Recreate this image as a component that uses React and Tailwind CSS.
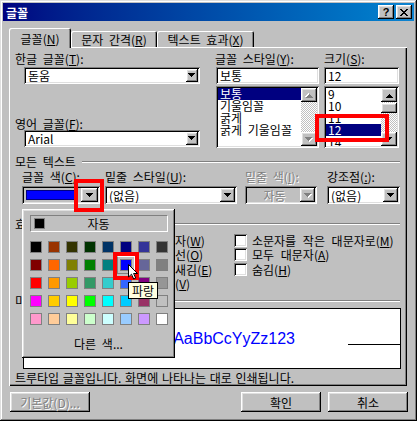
import React from "react";

const font = "font-['Noto_Sans_CJK_KR',sans-serif]";
const raised =
  "shadow-[inset_-1px_-1px_#000,inset_1px_1px_#fff,inset_-2px_-2px_#808080,inset_2px_2px_#dfdfdf]";
const sunken =
  "shadow-[inset_1px_1px_#808080,inset_-1px_-1px_#fff,inset_2px_2px_#000,inset_-2px_-2px_#dfdfdf]";
const etched = "text-[#808080] [text-shadow:1px_1px_0_#fff]";
const checker =
  "bg-[repeating-conic-gradient(#c0c0c0_0_25%,#ffffff_0_50%)] bg-[length:2px_2px]";

const swatches = [
  "bg-[#000000]", "bg-[#993300]", "bg-[#333300]", "bg-[#003300]", "bg-[#003366]", "bg-[#000080]", "bg-[#333399]", "bg-[#333333]",
  "bg-[#800000]", "bg-[#ff6600]", "bg-[#808000]", "bg-[#008000]", "bg-[#008080]", "bg-[#0000ff]", "bg-[#666699]", "bg-[#808080]",
  "bg-[#ff0000]", "bg-[#ff9900]", "bg-[#99cc00]", "bg-[#339966]", "bg-[#33cccc]", "bg-[#3366ff]", "bg-[#800080]", "bg-[#969696]",
  "bg-[#ff00ff]", "bg-[#ffcc00]", "bg-[#ffff00]", "bg-[#00ff00]", "bg-[#00ffff]", "bg-[#00ccff]", "bg-[#993366]", "bg-[#c0c0c0]",
  "bg-[#ff99cc]", "bg-[#ffcc99]", "bg-[#ffff99]", "bg-[#ccffcc]", "bg-[#ccffff]", "bg-[#99ccff]", "bg-[#cc99ff]", "bg-[#ffffff]",
];

function Arrow({ up, gray }) {
  const d = "M0 0h7v1h-1v1h-1v1h-1v1h-1v-1h-1v-1h-1v-1h-1z";
  return (
    <svg width="8" height="5" viewBox="0 0 8 5" shapeRendering="crispEdges" className={up ? "rotate-180" : ""}>
      {gray && <path d={d} fill="#fff" transform="translate(1 1)" />}
      <path d={d} fill={gray ? "#808080" : "#000"} />
    </svg>
  );
}

function DropBtn({ w, gray }) {
  return (
    <div className={`${w} h-full shrink-0 bg-[#c0c0c0] ${raised} flex items-center justify-center`}>
      <Arrow gray={gray} />
    </div>
  );
}

function Combo({ className, text, btn, disabled, center }) {
  return (
    <div className={`${className} flex p-[2px] ${sunken} ${disabled ? "bg-[#c0c0c0]" : "bg-white"}`}>
      <div
        className={`flex-1 flex items-center pl-[2px] whitespace-nowrap ${center ? "justify-center" : ""} ${
          disabled ? etched : ""
        }`}
      >
        {text}
      </div>
      <DropBtn w={btn} gray={disabled} />
    </div>
  );
}

function Edit({ className, text }) {
  return (
    <div className={`${className} h-[17px] p-[2px] bg-white ${sunken} flex items-center`}>
      <span className="pl-[2px]">{text}</span>
    </div>
  );
}

function VScroll({ disabled }) {
  return (
    <div className="w-[16px] shrink-0 flex flex-col">
      <div className={`h-[14px] bg-[#c0c0c0] ${raised} flex items-center justify-center`}>
        <Arrow up gray={disabled} />
      </div>
      <div className={`flex-1 ${checker}`}>
        {!disabled && <div className={`mt-[1px] h-[10px] bg-[#c0c0c0] ${raised}`} />}
      </div>
      <div className={`h-[14px] bg-[#c0c0c0] ${raised} flex items-center justify-center`}>
        <Arrow gray={disabled} />
      </div>
    </div>
  );
}

function ListBox({ className, items, sel, disabled }) {
  return (
    <div className={`${className} h-[62px] p-[2px] bg-white ${sunken} flex`}>
      <div className="flex-1 overflow-hidden">
        {items.map((t) => (
          <div
            key={t}
            className={`h-[12px] leading-[12px] pl-[2px] whitespace-nowrap ${
              t === sel ? "bg-[#000080] text-white" : ""
            }`}
          >
            {t}
          </div>
        ))}
      </div>
      <VScroll disabled={disabled} />
    </div>
  );
}

function Group({ label, className }) {
  return (
    <div className={`flex items-center h-[13px] pl-[6px] pr-[7px] ${className}`}>
      <span className="whitespace-nowrap">{label}</span>
      <div className="flex-1 ml-[6px] h-[2px] border-t border-t-[#808080] border-b border-b-white" />
    </div>
  );
}

function Check({ children }) {
  return (
    <div className="flex items-center h-[14.5px] whitespace-nowrap">
      <div className={`w-[13px] h-[13px] shrink-0 bg-white ${sunken}`} />
      <span className="ml-[5px]">{children}</span>
    </div>
  );
}

function Red({ className }) {
  return <div className={`absolute border-[4px] border-[#ff0000] ${className}`} />;
}

function ColorPopup() {
  return (
    <div className={`absolute left-[13px] top-[162px] w-[153px] h-[149px] bg-[#c0c0c0] ${raised} flex flex-col items-center pt-[6px]`}>
      <div className="relative w-[138px] h-[17px] border border-t-[#808080] border-l-[#808080] border-r-white border-b-white flex items-center">
        <div className="ml-[3px] w-[11px] h-[11px] bg-black border border-[#808080]" />
        <span className="absolute inset-0 flex items-center justify-center">자동</span>
      </div>
      <div className="grid grid-cols-[repeat(8,12px)] gap-[6px] mt-[9px]">
        {swatches.map((c, i) => (
          <div key={i} className={`relative w-[12px] h-[12px] border border-[#808080] ${c}`}>
            {i === 13 && (
              <span className="absolute -inset-[4px] border border-t-white border-r-white border-l-[#808080] border-b-[#808080]" />
            )}
          </div>
        ))}
      </div>
      <div className="mt-[12px]">다른 색...</div>
    </div>
  );
}

export default function App() {
  return (
    <div
      className={`w-[417px] h-[421px] bg-[#c0c0c0] p-[3px] ${font} text-[12px] leading-[13px] text-black [word-spacing:3px] shadow-[inset_-1px_-1px_#000,inset_1px_1px_#dfdfdf,inset_-2px_-2px_#808080,inset_2px_2px_#fff]`}
    >
      {/* title bar */}
      <div className="h-[18px] flex items-center bg-linear-to-r from-[#000080] to-[#1084d0] pl-[3px] pr-[2px]">
        <span className="text-white font-bold">글꼴</span>
        <div className="ml-auto flex gap-[2px]">
          <div className={`w-[16px] h-[14px] bg-[#c0c0c0] ${raised} flex items-center justify-center font-['Liberation_Sans',sans-serif] font-bold text-[11px] leading-none`}>
            ?
          </div>
          <div className={`w-[16px] h-[14px] bg-[#c0c0c0] ${raised} flex items-center justify-center`}>
            <svg width="8" height="7" viewBox="0 0 8 7" shapeRendering="crispEdges">
              <path d="M0 0h2v1h1v1h2v-1h1v-1h2v1h-1v1h-1v1h-1v1h1v1h1v1h1v1h-2v-1h-1v-1h-2v1h-1v1h-2v-1h1v-1h1v-1h1v-1h-1v-1h-1v-1h-1z" fill="#000" />
            </svg>
          </div>
        </div>
      </div>

      <div className="px-[6px]">
        {/* tabs */}
        <div className="flex items-end h-[19px] mt-[7px] relative z-10">
          <div className="w-[62px] h-[20px] -mb-px bg-[#c0c0c0] rounded-t-[2px] shadow-[inset_1px_1px_#fff,inset_-1px_0_#000,inset_-2px_0_#808080] flex justify-center pt-[4px]">
            글꼴(<u>N</u>)
          </div>
          <div className="w-[86px] h-[16px] bg-[#c0c0c0] rounded-t-[2px] shadow-[inset_1px_1px_#fff,inset_-1px_0_#000,inset_-2px_0_#808080] flex justify-center pt-[2px]">
            문자 간격(<u>R</u>)
          </div>
          <div className="w-[97px] h-[16px] bg-[#c0c0c0] rounded-t-[2px] shadow-[inset_1px_1px_#fff,inset_-1px_0_#000,inset_-2px_0_#808080] flex justify-center pt-[2px]">
            텍스트 효과(<u>X</u>)
          </div>
        </div>

        {/* panel */}
        <div className="relative w-[398px] h-[339px] pt-[5px] shadow-[inset_1px_1px_#fff,inset_-1px_-1px_#000,inset_-2px_-2px_#808080]">
          <div className="flex">
            <div className="w-[206px] pl-[6px]">
              <div>
                한글 글꼴(<u>T</u>):
              </div>
              <Combo className="ml-[9px] w-[176px] h-[17px] mt-[2px]" text="돋움" btn="w-[12px]" />
              <div className="mt-[33px]">
                영어 글꼴(<u>F</u>):
              </div>
              <Combo className="ml-[9px] w-[176px] h-[17px]" text="Arial" btn="w-[12px]" />
            </div>
            <div className="w-[104px]">
              <div className="whitespace-nowrap">
                글꼴 스타일(<u>Y</u>):
              </div>
              <Edit className="ml-[1px] w-[103px] mt-[2px]" text="보통" />
              <ListBox
                className="ml-[1px] w-[103px] mt-[2px]"
                items={["보통", "기울임꼴", "굵게", "굵게 기울임꼴"]}
                sel="보통"
                disabled
              />
            </div>
            <div className="ml-[5px] w-[76px]">
              <div>
                크기(<u>S</u>):
              </div>
              <Edit className="w-[75px] mt-[2px]" text="12" />
              <ListBox className="w-[75px] mt-[2px]" items={["9", "10", "11", "12", "14"]} sel="12" />
            </div>
          </div>

          <Group className="mt-[7px]" label="모든 텍스트" />
          <div className="flex mt-[2px] pl-[13px]">
            <div className="w-[78px]">
              <div className="whitespace-nowrap">
                글꼴 색(<u>C</u>):
              </div>
              <div className={`mt-[3px] h-[18px] flex p-[2px] bg-[#c0c0c0] ${sunken}`}>
                <div className="flex-1 p-[2px] pr-[3px]">
                  <div className="h-full bg-[#0000ff] border border-[#000080]" />
                </div>
                <DropBtn w="w-[17px]" />
              </div>
            </div>
            <div className="ml-[5px] w-[132px]">
              <div className="whitespace-nowrap">
                밑줄 스타일(<u>U</u>):
              </div>
              <Combo className="mt-[3px] h-[18px] w-full" text="(없음)" btn="w-[15px]" />
            </div>
            <div className="ml-[8px] w-[72px]">
              <div className={`whitespace-nowrap ${etched}`}>
                밑줄 색(<u>I</u>):
              </div>
              <Combo className="mt-[3px] h-[18px] w-full" text="자동" btn="w-[15px]" disabled center />
            </div>
            <div className="ml-[10px] w-[73px]">
              <div className="whitespace-nowrap">
                강조점(<u>:</u>):
              </div>
              <Combo className="mt-[3px] h-[18px] w-full" text="(없음)" btn="w-[15px]" />
            </div>
          </div>

          <Group className="mt-[13px]" label="효과" />
          <div className="flex mt-[3px] pl-[18px]">
            <div className="w-[108px]">
              <Check>취소선(<u>K</u>)</Check>
              <Check>이중 취소선(<u>L</u>)</Check>
              <Check>위 첨자(<u>P</u>)</Check>
              <Check>아래 첨자(<u>B</u>)</Check>
            </div>
            <div className="w-[99px]">
              <Check>그림자(<u>W</u>)</Check>
              <Check>외곽선(<u>O</u>)</Check>
              <Check>돋을새김(<u>E</u>)</Check>
              <Check>음각(<u>V</u>)</Check>
            </div>
            <div className="[word-spacing:4px]">
              <Check>소문자를 작은 대문자로(<u>M</u>)</Check>
              <Check>모두 대문자(<u>A</u>)</Check>
              <Check>숨김(<u>H</u>)</Check>
            </div>
          </div>

          <Group className="mt-[3px]" label="미리 보기" />
          <div className="ml-[14px] mt-[1px] w-[378px] h-[61px] border border-black bg-white pt-[21px]">
            <div className="flex items-end h-[18px]">
              <div className="w-[52px] h-px bg-black mb-[3px]" />
              <div className="flex-1 text-center whitespace-nowrap text-[16px] leading-[18px] text-[#0000ff] font-['Liberation_Sans','Noto_Sans_CJK_KR',sans-serif] [word-spacing:0]">
                가나다AaBbCcYyZz123
              </div>
              <div className="w-[52px] h-px bg-black mb-[3px]" />
            </div>
          </div>
          <div className="mt-[2px] pl-[6px] whitespace-nowrap [word-spacing:1px]">
            트루타입 글꼴입니다. 화면에 나타나는 대로 인쇄됩니다.
          </div>

          {/* overlays */}
          <Red className="left-[306px] top-[67px] w-[74px] h-[28px]" />
          <ColorPopup />
          <Red className="left-[65px] top-[132px] w-[30px] h-[33px]" />
          <Red className="left-[104px] top-[205px] w-[26px] h-[28px]" />
          <svg className="absolute left-[119px] top-[217px]" width="11" height="16" viewBox="0 0 11 16">
            <path d="M0.5 0.5V13L3.5 10.2L5.7 15L7.7 14.1L5.6 9.5H9.5Z" fill="#fff" stroke="#000" strokeWidth="1" strokeLinejoin="miter" />
          </svg>
          <div className="absolute left-[119px] top-[235px] w-[30px] h-[17px] bg-[#ffffe1] border border-black flex items-center justify-center">
            파랑
          </div>
        </div>

        {/* buttons */}
        <div className="flex justify-between w-[399px] mt-[6px]">
          <div className={`ml-[1px] w-[80px] h-[20px] ${raised} flex items-center justify-center ${etched}`}>
            기본값(D)...
          </div>
          <div className="flex gap-[7px]">
            <div className={`w-[80px] h-[20px] ${raised} flex items-center justify-center`}>확인</div>
            <div className={`w-[80px] h-[20px] ${raised} flex items-center justify-center`}>취소</div>
          </div>
        </div>
      </div>
    </div>
  );
}
